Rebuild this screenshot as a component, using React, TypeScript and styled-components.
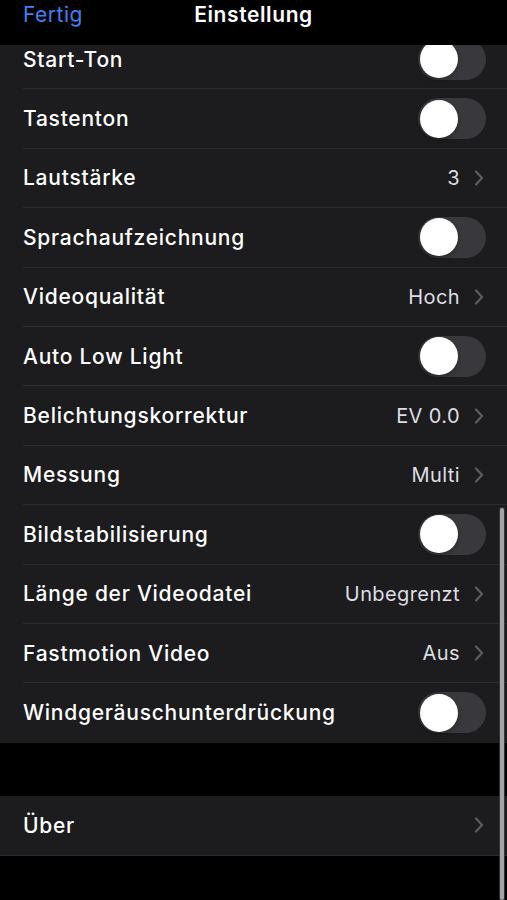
import styled, { createGlobalStyle } from 'styled-components';

const GlobalStyle = createGlobalStyle`
  html, body {
    margin: 0;
    padding: 0;
    background: #000;
  }
  body {
    font-family: Inter, "Noto Sans", "Liberation Sans", sans-serif;
    -webkit-font-smoothing: antialiased;
  }
`;

type Item =
  | { label: string; kind: 'toggle' }
  | { label: string; kind: 'link'; value?: string };

const mainItems: Item[] = [
  { label: 'Start-Ton', kind: 'toggle' },
  { label: 'Tastenton', kind: 'toggle' },
  { label: 'Lautstärke', kind: 'link', value: '3' },
  { label: 'Sprachaufzeichnung', kind: 'toggle' },
  { label: 'Videoqualität', kind: 'link', value: 'Hoch' },
  { label: 'Auto Low Light', kind: 'toggle' },
  { label: 'Belichtungskorrektur', kind: 'link', value: 'EV 0.0' },
  { label: 'Messung', kind: 'link', value: 'Multi' },
  { label: 'Bildstabilisierung', kind: 'toggle' },
  { label: 'Länge der Videodatei', kind: 'link', value: 'Unbegrenzt' },
  { label: 'Fastmotion Video', kind: 'link', value: 'Aus' },
  { label: 'Windgeräuschunterdrückung', kind: 'toggle' },
];

function Chevron() {
  return (
    <svg width="10" height="16" viewBox="0 0 10 16" fill="none">
      <path d="M2 1.5 L8 8 L2 14.5" stroke="#5c5c61" strokeWidth="2.2" strokeLinecap="round" strokeLinejoin="round" />
    </svg>
  );
}

function SettingRow({ item, last }: { item: Item; last?: boolean }) {
  return (
    <Row $last={last}>
      <Label>{item.label}</Label>
      {item.kind === 'toggle' ? (
        <Switch>
          <Knob />
        </Switch>
      ) : (
        <Accessory>
          {item.value && <Value>{item.value}</Value>}
          <Chevron />
        </Accessory>
      )}
    </Row>
  );
}

export default function App() {
  return (
    <Screen>
      <GlobalStyle />
      <NavBar>
        <NavButton>Fertig</NavButton>
        <NavTitle>Einstellung</NavTitle>
        <span />
      </NavBar>
      <Scroller>
        <Content>
          <Group>
            {mainItems.map((item, i) => (
              <SettingRow key={item.label} item={item} last={i === mainItems.length - 1} />
            ))}
          </Group>
          <Group $spaced $bordered>
            <SettingRow item={{ label: 'Über', kind: 'link' }} last />
          </Group>
        </Content>
        <ScrollIndicator />
      </Scroller>
    </Screen>
  );
}

const Screen = styled.div`
  width: 507px;
  height: 900px;
  background: #000;
  display: flex;
  flex-direction: column;
  overflow: hidden;
`;

const NavBar = styled.header`
  position: relative;
  z-index: 2;
  flex: 0 0 45px;
  box-sizing: border-box;
  background: #000;
  display: grid;
  grid-template-columns: 1fr auto 1fr;
  align-items: start;
  padding: 2px 23px 0;
`;

const NavButton = styled.span`
  color: #3c82f6;
  font-size: 21px;
  font-weight: 400;
  letter-spacing: 0.5px;
`;

const NavTitle = styled.span`
  color: #fff;
  font-size: 21px;
  font-weight: 600;
  letter-spacing: 0.6px;
`;

const Scroller = styled.div`
  flex: 1;
  position: relative;
  overflow: hidden;
`;

const Content = styled.div`
  margin-top: -15px;
`;

const Group = styled.section<{ $spaced?: boolean; $bordered?: boolean }>`
  background: #1c1c1e;
  margin-top: ${(p) => (p.$spaced ? '53px' : '0')};
  border-bottom: ${(p) => (p.$bordered ? '1px solid #2a2a2d' : 'none')};
`;

const Row = styled.div<{ $last?: boolean }>`
  height: 59.4px;
  box-sizing: border-box;
  margin-left: 23px;
  padding-right: 21px;
  display: flex;
  align-items: center;
  justify-content: space-between;
  border-bottom: ${(p) => (p.$last ? 'none' : '1px solid #2c2c2f')};
`;

const Label = styled.span`
  color: #fff;
  font-size: 21px;
  font-weight: 500;
  letter-spacing: 0.75px;
`;

const Accessory = styled.div`
  display: flex;
  align-items: center;
  gap: 14px;
  padding-right: 2px;
`;

const Value = styled.span`
  color: #dedee2;
  font-size: 20px;
  font-weight: 400;
  letter-spacing: 0.4px;
`;

const Switch = styled.div`
  width: 68px;
  height: 41px;
  border-radius: 21px;
  background: #39393d;
  display: flex;
  align-items: center;
  padding: 0 2px;
  box-sizing: border-box;
`;

const Knob = styled.div`
  width: 38px;
  height: 38px;
  border-radius: 50%;
  background: #fff;
  box-shadow: 0 2px 4px rgba(0, 0, 0, 0.3);
`;

const ScrollIndicator = styled.div`
  position: absolute;
  right: 3px;
  top: 463px;
  bottom: 0;
  width: 4px;
  border-radius: 3px;
  background: #a3a3a8;
  box-shadow: 0 0 0 1px rgba(60, 60, 64, 0.8);
`;
